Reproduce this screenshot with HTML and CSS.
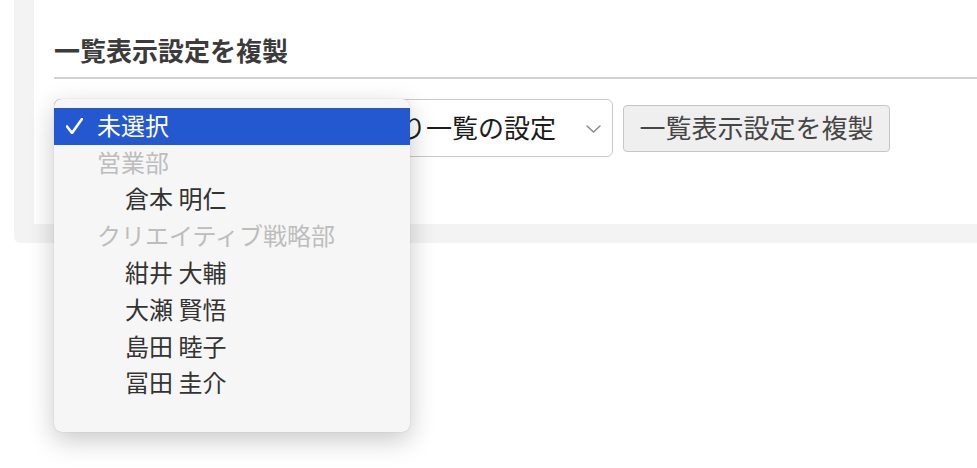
FILE: index.html
```html
<!DOCTYPE html>
<html lang="ja">
<head>
<meta charset="utf-8">
<title>一覧表示設定を複製</title>
<link rel="stylesheet" href="styles.css">
</head>
<body>
<div class="page">
  <div class="panel">
    <div class="card">
      <h2 class="title">一覧表示設定を複製</h2>
      <div class="row">
        <div class="select user-select"><span class="value is-open">未選択</span></div>
        <div class="select list-select">
          <span class="value">見積り一覧の設定</span>
          <svg class="chev" width="15" height="8" viewBox="0 0 15 8"><polyline points="1,1 7.5,7 14,1" fill="none" stroke="#8a8a8a" stroke-width="1.5" stroke-linecap="round" stroke-linejoin="round"/></svg>
        </div>
        <button class="copy-btn">一覧表示設定を複製</button>
        <div class="menu">
          <div class="opt selected">
            <svg class="check" width="17" height="16" viewBox="0 0 17 16"><polyline points="1,8.5 6,15 16,1" fill="none" stroke="#ffffff" stroke-width="2.6" stroke-linecap="round" stroke-linejoin="round"/></svg>
            <span>未選択</span>
          </div>
          <div class="opt group">営業部</div>
          <div class="opt item">倉本 明仁</div>
          <div class="opt group">クリエイティブ戦略部</div>
          <div class="opt item">紺井 大輔</div>
          <div class="opt item">大瀬 賢悟</div>
          <div class="opt item">島田 睦子</div>
          <div class="opt item">冨田 圭介</div>
        </div>
      </div>
    </div>
  </div>
</div>
</body>
</html>
```
FILE: styles.css
```css
html, body {
  margin: 0;
  padding: 0;
  background: #ffffff;
}
body {
  font-family: "Noto Sans CJK JP", "Noto Sans", sans-serif;
  width: 977px;
  height: 468px;
  overflow: hidden;
}
.page {
  padding-left: 14px;
}
.panel {
  background: #f3f3f3;
  padding: 0 0 19px 20px;
  border-radius: 0 0 0 6px;
}
.card {
  background: #ffffff;
  padding: 32px 0 67px 20px;
}
.title {
  margin: 0;
  font-size: 26px;
  line-height: 36px;
  font-weight: 700;
  color: #3b3b3b;
  padding-bottom: 9px;
  border-bottom: 2px solid #d2d2d2;
}
.row {
  position: relative;
  margin-top: 20px;
  display: flex;
  align-items: center;
  gap: 10px;
}
.select {
  box-sizing: border-box;
  height: 58px;
  border: 1px solid #c9c9c9;
  border-radius: 6px;
  background: #ffffff;
  display: flex;
  align-items: center;
  justify-content: space-between;
  padding: 0 11px 0 14px;
  font-size: 26px;
  color: #1c1c1c;
  line-height: 1;
}
.select .value {
  padding-bottom: 2px;
}
.select .value.is-open {
  visibility: hidden;
}
.user-select {
  width: 269px;
}
.list-select {
  width: 280px;
}
.chev {
  display: block;
  margin-top: 1px;
}
.copy-btn {
  box-sizing: border-box;
  width: 267px;
  height: 47px;
  border: 1px solid #c6c6c6;
  border-radius: 4px;
  background: #efefef;
  font-family: inherit;
  font-size: 26px;
  line-height: 1;
  color: #454545;
  padding: 0 0 2px 0;
  margin: 0;
}
.menu {
  position: absolute;
  top: 0;
  left: 0;
  width: 356px;
  height: 333px;
  box-sizing: border-box;
  padding-top: 9px;
  background: #f6f6f6;
  border-radius: 8px;
  box-shadow: 0 8px 26px rgba(0, 0, 0, 0.22), 0 0 1px rgba(0, 0, 0, 0.25);
  z-index: 10;
}
.opt {
  box-sizing: border-box;
  height: 36.8px;
  display: flex;
  align-items: center;
  font-size: 24px;
  line-height: 1;
  padding-bottom: 3px;
  color: #333333;
  white-space: nowrap;
}
.opt.selected {
  background: #2458d1;
  color: #ffffff;
  padding-left: 12px;
}
.check {
  display: block;
  width: 17px;
  margin-right: 14px;
  margin-top: 2px;
}
.opt.group {
  color: #bdbdbd;
  padding-left: 43px;
}
.opt.item {
  padding-left: 71px;
}
```
